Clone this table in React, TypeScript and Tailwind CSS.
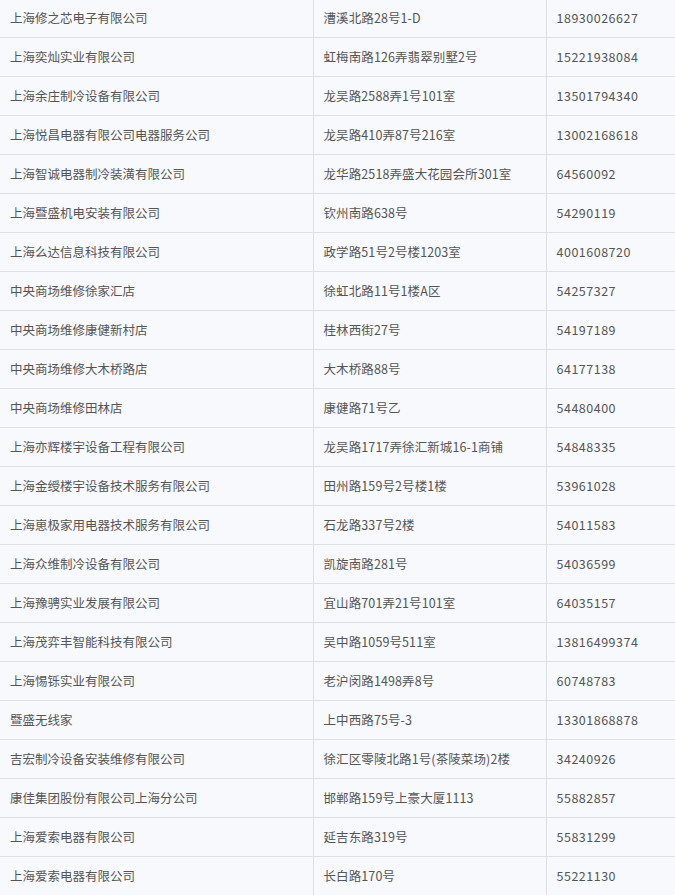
const rows: [string, string, string][] = [
  ['上海修之芯电子有限公司', '漕溪北路28号1-D', '18930026627'],
  ['上海奕灿实业有限公司', '虹梅南路126弄翡翠别墅2号', '15221938084'],
  ['上海余庄制冷设备有限公司', '龙吴路2588弄1号101室', '13501794340'],
  ['上海悦昌电器有限公司电器服务公司', '龙吴路410弄87号216室', '13002168618'],
  ['上海智诚电器制冷装潢有限公司', '龙华路2518弄盛大花园会所301室', '64560092'],
  ['上海暨盛机电安装有限公司', '钦州南路638号', '54290119'],
  ['上海么达信息科技有限公司', '政学路51号2号楼1203室', '4001608720'],
  ['中央商场维修徐家汇店', '徐虹北路11号1楼A区', '54257327'],
  ['中央商场维修康健新村店', '桂林西街27号', '54197189'],
  ['中央商场维修大木桥路店', '大木桥路88号', '64177138'],
  ['中央商场维修田林店', '康健路71号乙', '54480400'],
  ['上海亦辉楼宇设备工程有限公司', '龙吴路1717弄徐汇新城16-1商铺', '54848335'],
  ['上海金绶楼宇设备技术服务有限公司', '田州路159号2号楼1楼', '53961028'],
  ['上海崽极家用电器技术服务有限公司', '石龙路337号2楼', '54011583'],
  ['上海众维制冷设备有限公司', '凯旋南路281号', '54036599'],
  ['上海豫骋实业发展有限公司', '宜山路701弄21号101室', '64035157'],
  ['上海茂弈丰智能科技有限公司', '吴中路1059号511室', '13816499374'],
  ['上海惕铄实业有限公司', '老沪闵路1498弄8号', '60748783'],
  ['暨盛无线家', '上中西路75号-3', '13301868878'],
  ['吉宏制冷设备安装维修有限公司', '徐汇区零陵北路1号(茶陵菜场)2楼', '34240926'],
  ['康佳集团股份有限公司上海分公司', '邯郸路159号上豪大厦1113', '55882857'],
  ['上海爱索电器有限公司', '延吉东路319号', '55831299'],
  ['上海爱索电器有限公司', '长白路170号', '55221130'],
];

export default function App() {
  return (
    <div className="w-[675px] h-[895px] overflow-hidden bg-[#f7f9fc]">
      <table
        className="w-[675px] -mt-[2px] border-collapse table-fixed text-[12.5px] text-[#555]"
        style={{ fontFamily: '"Noto Sans CJK SC", "Noto Sans", sans-serif' }}
      >
        <colgroup>
          <col className="w-[313px]" />
          <col className="w-[233px]" />
          <col className="w-[129px]" />
        </colgroup>
        <tbody>
          {rows.map((r, i) => (
            <tr key={i} className="h-[39px] bg-[#f7f9fc]">
              <td className="border border-[#dcdfe3] border-l-0 pl-[10px] whitespace-nowrap">{r[0]}</td>
              <td className="border border-[#dcdfe3] pl-[10px] whitespace-nowrap tracking-[0.1px]">{r[1]}</td>
              <td className="border border-[#dcdfe3] border-r-0 pl-[10px] whitespace-nowrap tracking-[0.5px]">{r[2]}</td>
            </tr>
          ))}
        </tbody>
      </table>
    </div>
  );
}
